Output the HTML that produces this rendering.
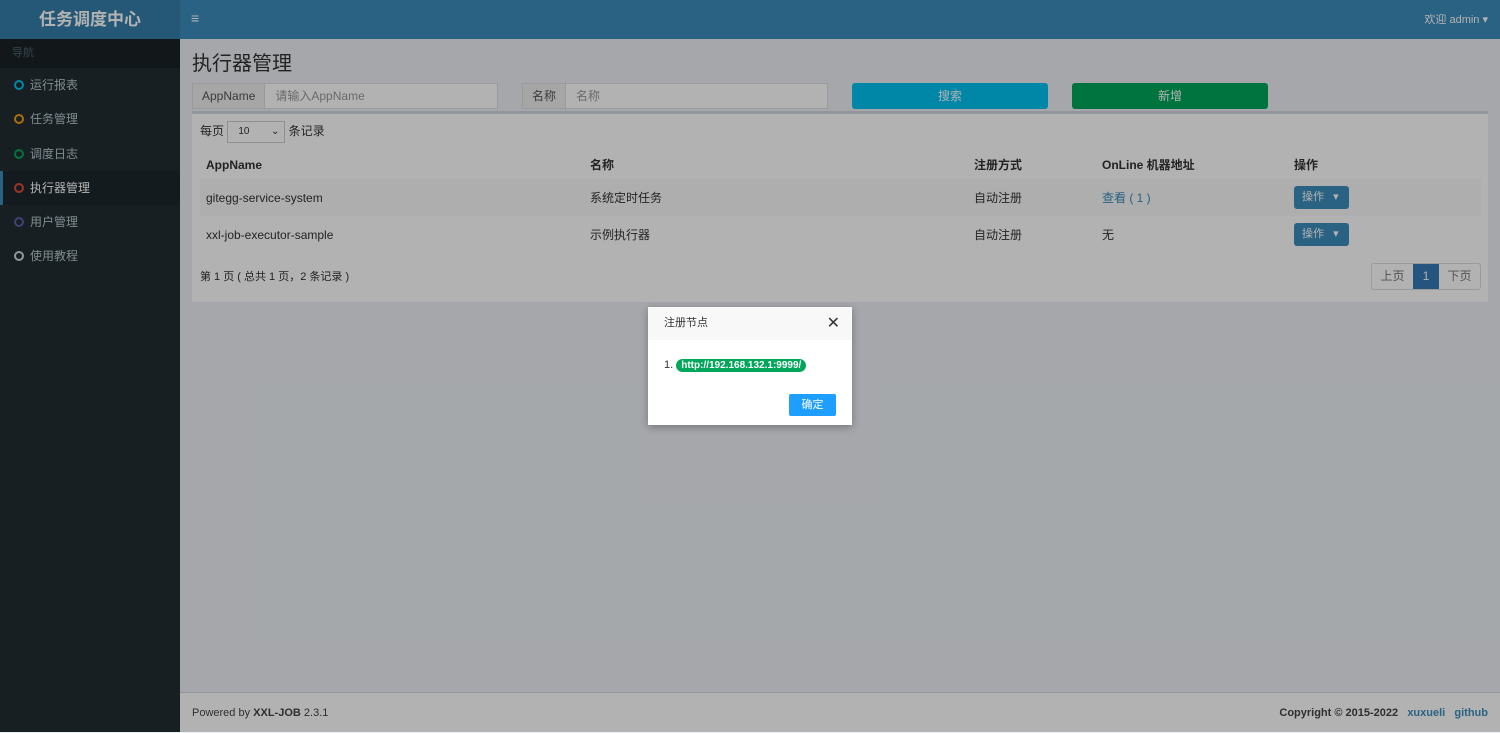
<!DOCTYPE html>
<html><head><meta charset="utf-8"><style>
*{box-sizing:border-box;margin:0;padding:0}
body{width:1500px;height:732px;overflow:hidden;position:relative;font-family:"Liberation Sans","Noto Sans CJK SC",sans-serif;font-size:12px;color:#333;background:#ecf0f5}
.hdr{position:absolute;left:0;top:0;width:1500px;height:39px;background:#3c8dbc}
.logo{position:absolute;left:0;top:0;width:180px;height:39px;background:#367fa9;color:#fff;font-size:17px;font-weight:bold;text-align:center;line-height:39px}
.burger{position:absolute;left:191px;top:10px;color:#fff;font-size:14px}
.user{position:absolute;right:12px;top:11px;color:#fff;font-size:11px}
.side{position:absolute;left:0;top:39px;width:180px;bottom:0;background:#222d32}
.nav{height:29px;background:#1a2226;color:#4b646f;font-size:11px;line-height:29px;padding-left:12px}
.item{height:34.3px;line-height:34px;color:#b8c7ce;padding-left:14px;font-size:12px;position:relative}
.item i{display:inline-block;width:10px;height:10px;border:2px solid;border-radius:50%;margin-right:6px;vertical-align:-1px}
.item.act{background:#1e282c;color:#fff;border-left:3px solid #3c8dbc;padding-left:11px}
h1{position:absolute;left:192px;top:47px;font-size:20px;font-weight:normal;color:#333}
.ig{position:absolute;top:83px;height:26px;border:1px solid #ddd;background:#fff;display:flex}
.ig span{background:#eee;border-right:1px solid #ddd;padding:0 9px;line-height:24px;color:#555}
.ig em{font-style:normal;color:#999;padding-left:10px;line-height:24px}
.btn{position:absolute;top:83px;height:26px;width:196px;color:#fff;text-align:center;line-height:26px;border-radius:3px}
.box{position:absolute;left:192px;top:111px;width:1296px;height:191px;background:#fff;border-top:3px solid #d2d6de}
table{position:absolute;left:8px;top:36px;width:1281px;border-collapse:collapse}
td,th{text-align:left;padding:0 6px;height:37px;font-size:12px}
th{height:29px;font-weight:bold}
tr.odd td{background:#f9f9f9}
.op{display:inline-block;background:#3c8dbc;color:#fff;width:55px;height:23px;line-height:23px;padding-left:8px;border-radius:3px;font-size:11px}
.foot{position:absolute;left:180px;top:692px;right:0;height:40px;background:#fff;border-top:1px solid #d2d6de;line-height:40px;padding:0 12px;font-size:11px;color:#444}
.ov{position:absolute;inset:0;background:rgba(0,0,0,.3)}
.modal{position:absolute;left:648px;top:307px;width:204px;height:118px;background:#fff;box-shadow:0 2px 8px rgba(0,0,0,.3)}
.mh{height:33px;background:#f8f8f8;line-height:33px;padding-left:16px;font-size:11px;color:#333}
</style></head><body>
<div class="hdr"><div class="logo">任务调度中心</div><div class="burger">≡</div><div class="user">欢迎 admin ▾</div></div>
<div class="side">
<div class="nav">导航</div>
<div class="item"><i style="color:#00c0ef"></i>运行报表</div>
<div class="item"><i style="color:#f39c12"></i>任务管理</div>
<div class="item"><i style="color:#00a65a"></i>调度日志</div>
<div class="item act"><i style="color:#dd4b39"></i>执行器管理</div>
<div class="item"><i style="color:#605ca8"></i>用户管理</div>
<div class="item"><i style="color:#d2d6de"></i>使用教程</div>
</div>
<h1>执行器管理</h1>
<div class="ig" style="left:192px;width:306px"><span>AppName</span><em>请输入AppName</em></div>
<div class="ig" style="left:522px;width:306px"><span>名称</span><em>名称</em></div>
<div class="btn" style="left:852px;background:#00c0ef">搜索</div>
<div class="btn" style="left:1072px;background:#00a65a">新增</div>
<div class="box">
<div style="position:absolute;left:8px;top:6px;line-height:22px">每页 <span style="display:inline-block;width:58px;height:22px;border:1px solid #ccc;vertical-align:middle;padding-left:10px;font-size:10px;line-height:20px">10 <span style="float:right;margin-right:5px">⌄</span></span> 条记录</div>
<table>
<tr><th style="width:384px">AppName</th><th style="width:384px">名称</th><th style="width:128px">注册方式</th><th style="width:192px">OnLine 机器地址</th><th>操作</th></tr>
<tr class="odd"><td>gitegg-service-system</td><td>系统定时任务</td><td>自动注册</td><td style="color:#3c8dbc">查看 ( 1 )</td><td><span class="op">操作 &nbsp; ▾</span></td></tr>
<tr><td>xxl-job-executor-sample</td><td>示例执行器</td><td>自动注册</td><td>无</td><td><span class="op">操作 &nbsp; ▾</span></td></tr>
</table>
<div style="position:absolute;left:8px;top:154px;font-size:11px">第 1 页 ( 总共 1 页，2 条记录 )</div>
<div style="position:absolute;left:1179px;top:149px;display:flex;height:27px;border:1px solid #ddd;border-radius:3px;line-height:25px;font-size:12px">
<span style="width:41px;text-align:center;color:#777">上页</span><span style="width:26px;text-align:center;background:#337ab7;color:#fff">1</span><span style="width:41px;text-align:center;color:#777">下页</span></div>
</div>
<div class="foot">Powered by <b>XXL-JOB</b> 2.3.1<span style="float:right"><b>Copyright © 2015-2022</b> &nbsp; <b style="color:#3c8dbc">xuxueli</b> &nbsp; <b style="color:#3c8dbc">github</b></span></div>
<div class="ov"></div>
<div class="modal"><div class="mh">注册节点<span style="position:absolute;right:12px;top:0;font-size:16px;color:#333">✕</span></div>
<div style="position:absolute;left:16px;top:52px;font-size:11px">1. <span style="background:#00a65a;color:#fff;font-weight:bold;border-radius:8px;padding:1px 5px;font-size:10px">http://192.168.132.1:9999/</span></div>
<div style="position:absolute;left:141px;top:87px;width:47px;height:22px;background:#1e9fff;color:#fff;text-align:center;line-height:22px;font-size:11px;border-radius:2px">确定</div>
</div>
</body></html>
